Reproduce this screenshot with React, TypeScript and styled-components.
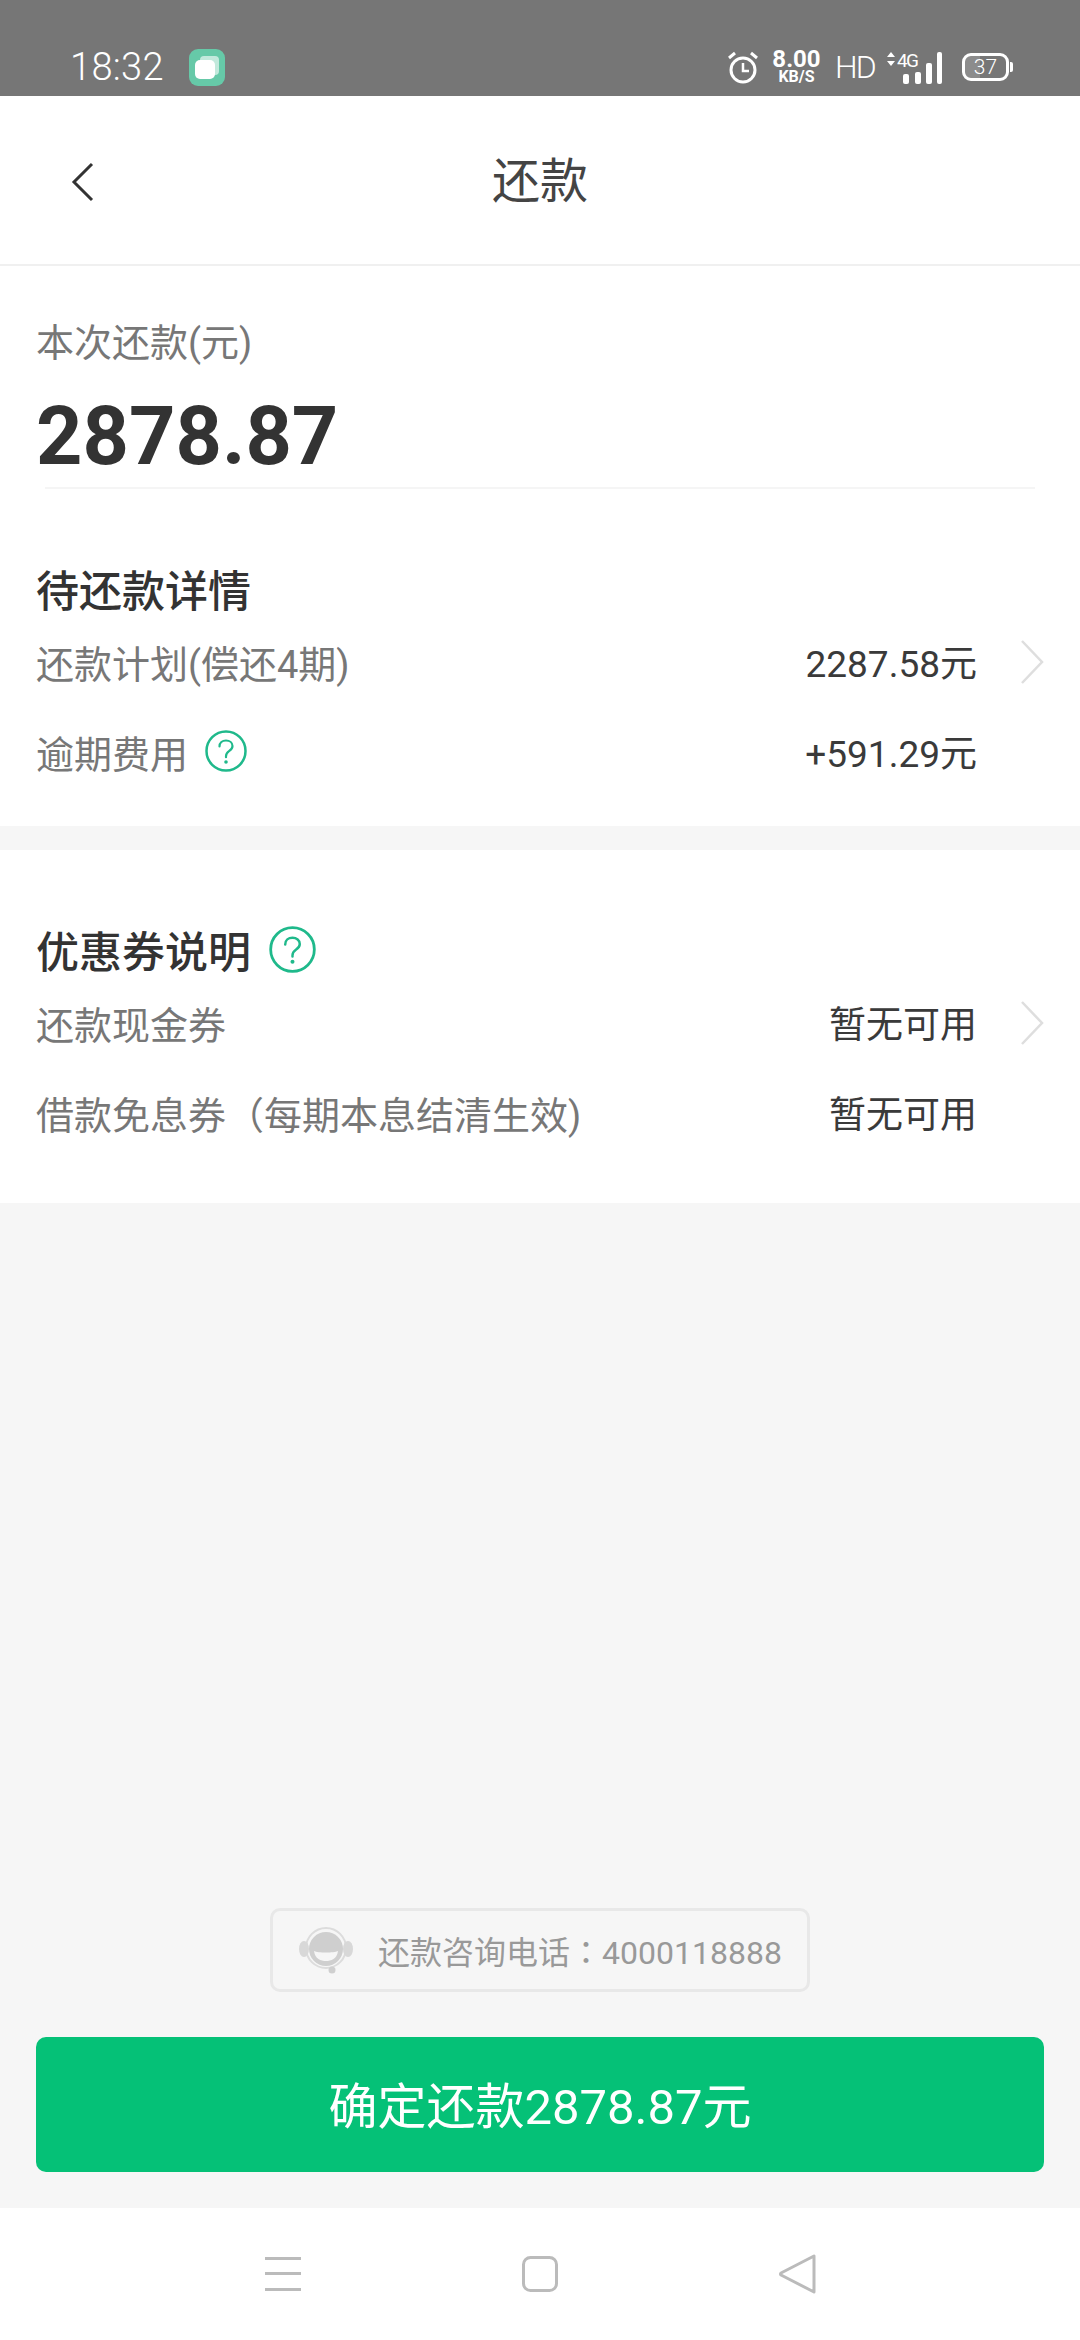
import styled, { createGlobalStyle } from 'styled-components'

const GlobalStyle = createGlobalStyle`
  html, body {
    margin: 0;
    padding: 0;
    background: #f6f6f6;
  }
  * {
    box-sizing: border-box;
  }
`

const Page = styled.div`
  width: 1080px;
  height: 2340px;
  display: flex;
  flex-direction: column;
  background: #f6f6f6;
  font-family: Roboto, 'Noto Sans CJK SC', sans-serif;
  overflow: hidden;
`

const StatusBar = styled.div`
  height: 96px;
  flex-shrink: 0;
  padding: 38px 68px 0 70px;
  display: flex;
  align-items: center;
  justify-content: space-between;
  background: #767676;
  color: #fff;
`

const StatusLeft = styled.div`
  display: flex;
  align-items: center;
  gap: 25px;
`

const StatusRight = styled.div`
  display: flex;
  align-items: center;
  gap: 15px;
`

const Time = styled.span`
  font-size: 38px;
  font-weight: 300;
  line-height: 44px;
  letter-spacing: 0.3px;
`

const Speed = styled.div`
  width: 47px;
  display: flex;
  flex-direction: column;
  align-items: center;
  font-weight: 700;
`

const SpeedValue = styled.span`
  font-size: 24px;
  line-height: 20px;
`

const SpeedUnit = styled.span`
  font-size: 16px;
  line-height: 16px;
`

const Hd = styled.span`
  width: 36px;
  font-size: 32px;
  font-weight: 300;
  line-height: 36px;
  letter-spacing: -2px;
`

const Battery = styled.div<{ $level: number }>`
  position: relative;
  width: 47px;
  height: 28px;
  margin: 0 3px 0 5px;
  border: 3px solid #fff;
  border-radius: 9px;
  display: flex;
  align-items: center;
  justify-content: center;
  font-size: 21px;
  font-weight: 300;
  background: linear-gradient(90deg, #8c8c8c ${(p) => p.$level}%, transparent ${(p) => p.$level}%);

  &::after {
    content: '';
    position: absolute;
    right: -7px;
    top: 6px;
    width: 3px;
    height: 10px;
    border-radius: 0 2px 2px 0;
    background: #fff;
  }
`

const NavBar = styled.header`
  position: relative;
  height: 170px;
  flex-shrink: 0;
  padding-top: 4px;
  display: flex;
  align-items: center;
  justify-content: center;
  background: #fff;
  border-bottom: 2px solid #f0f0f0;
`

const BackButton = styled.div`
  position: absolute;
  left: 71px;
  top: 66px;
  display: flex;
`

const NavTitle = styled.h1`
  margin: 0;
  font-size: 48px;
  font-weight: 400;
  line-height: 60px;
  color: #444;
`

const Card = styled.section<{ $top: number; $bottom: number }>`
  padding: ${(p) => p.$top}px 0 ${(p) => p.$bottom}px;
  background: #fff;
  flex-shrink: 0;
`

const Inner = styled.div`
  padding: 0 36px;
`

const AmountLabel = styled.div`
  font-size: 38px;
  line-height: 50px;
  margin-top: -1px;
  color: #777;
`

const Amount = styled.div`
  margin-top: 24px;
  margin-bottom: -1px;
  font-size: 81px;
  font-weight: 700;
  line-height: 90px;
  color: #333;
`

const Divider = styled.div`
  height: 2px;
  margin: 6px 45px 0;
  background: #f5f5f5;
`

const SectionTitle = styled.h2<{ $top?: number }>`
  margin: ${(p) => p.$top ?? 0}px 0 0;
  padding: 0 36px 2px;
  height: 60px;
  display: flex;
  align-items: center;
  gap: 18px;
  font-size: 43px;
  font-weight: 500;
  color: #333;
`

const Row = styled.div`
  position: relative;
  height: 90px;
  padding: 0 103px 6px 36px;
  display: flex;
  align-items: center;
  justify-content: space-between;
  font-size: 38px;
`

const RowLabel = styled.div`
  display: flex;
  align-items: center;
  gap: 17px;
  color: #777;
`

const RowValue = styled.div`
  font-size: 37px;
  color: #3a3a3a;
`

const RowArrow = styled.div`
  position: absolute;
  right: 36px;
  top: 21px;
  display: flex;
`

const CardGap = styled.div`
  height: 24px;
  flex-shrink: 0;
`

const Spacer = styled.div`
  flex: 1;
`

const SupportWrap = styled.div`
  display: flex;
  justify-content: center;
  flex-shrink: 0;
`

const SupportBox = styled.div`
  width: 540px;
  height: 84px;
  padding-left: 26px;
  display: flex;
  align-items: center;
  gap: 25px;
  border: 3px solid #e8e8e8;
  border-radius: 10px;
  font-size: 32px;
  color: #999;
`

const Colon = styled.span`
  font-family: 'Noto Sans CJK TC', sans-serif;
`

const PayButton = styled.button`
  display: block;
  width: 1008px;
  height: 135px;
  margin: 45px 36px 36px;
  padding: 0 0 4px;
  flex-shrink: 0;
  border: 0;
  border-radius: 10px;
  background: #05c177;
  color: #fff;
  font-family: inherit;
  font-size: 49px;
`

const BottomNav = styled.nav`
  height: 132px;
  flex-shrink: 0;
  padding-left: 2px;
  display: flex;
  align-items: center;
  justify-content: center;
  gap: 221px;
  background: #fff;
`

const Help = ({ size }: { size: number }) => (
  <svg width={size} height={size} viewBox="0 0 42 42" fill="none">
    <circle cx="21" cy="21" r="19.5" stroke="#1fb98b" strokeWidth="2.5" />
    <path
      d="M14.5 16.5c0-3.8 2.9-6 6.5-6s6.500 2.300 6.500 5.500c0 2.700-1.700 4-3.500 5.200-1.900 1.300-3 2.400-3 5v1"
      stroke="#1fb98b"
      strokeWidth="2.2"
      strokeLinecap="round"
    />
    <circle cx="21" cy="32" r="1.800" fill="#1fb98b" />
  </svg>
)

const Chevron = () => (
  <svg width="24" height="44" viewBox="0 0 24 44" fill="none">
    <path d="M2 1l20 21L2 43" stroke="#dedede" strokeWidth="2.500" />
  </svg>
)

const rows = {
  detail: [
    { label: '还款计划(偿还4期)', value: '2287.58元', arrow: true },
    { label: '逾期费用', value: '+591.29元', help: true },
  ],
  coupon: [
    { label: '还款现金券', value: '暂无可用', arrow: true },
    { label: '借款免息券（每期本息结清生效)', value: '暂无可用' },
  ],
}

type RowData = { label: string; value: string; arrow?: boolean; help?: boolean }

const InfoRow = ({ label, value, arrow, help }: RowData) => (
  <Row>
    <RowLabel>
      {label}
      {help && <Help size={42} />}
    </RowLabel>
    <RowValue>{value}</RowValue>
    {arrow && (
      <RowArrow>
        <Chevron />
      </RowArrow>
    )}
  </Row>
)

export default function App() {
  return (
    <Page>
      <GlobalStyle />
      <StatusBar>
        <StatusLeft>
          <Time>18:32</Time>
          <svg width="36" height="37" viewBox="0 0 36 37">
            <rect width="36" height="37" rx="9" fill="#66c9a8" />
            <rect x="11" y="7" width="19" height="19" rx="4" fill="#fff" opacity="0.6" />
            <rect x="6" y="11" width="20" height="19" rx="5" fill="#fff" />
          </svg>
        </StatusLeft>
        <StatusRight>
          <svg width="30" height="33" viewBox="0 0 30 33" fill="none" stroke="#fff">
            <circle cx="15" cy="19" r="12" strokeWidth="3" />
            <path d="M15 12v8h6" strokeWidth="2.500" />
            <path d="M1 7l6-5M29 7l-6-5" strokeWidth="3" />
          </svg>
          <Speed>
            <SpeedValue>8.00</SpeedValue>
            <SpeedUnit>KB/S</SpeedUnit>
          </Speed>
          <Hd>HD</Hd>
          <svg width="56" height="34" viewBox="0 0 56 34" fill="#fff">
            <path d="M5 2l4 5H1zM5 16l4-5H1z" />
            <text x="11" y="17" fontFamily="Roboto" fontSize="19" textLength="22">
              4G
            </text>
            <rect x="17" y="24" width="6" height="10" rx="2" />
            <rect x="29" y="22" width="6" height="12" rx="2" />
            <rect x="40" y="13" width="6" height="21" rx="2" />
            <rect x="51" y="2" width="5" height="32" rx="2" />
          </svg>
          <Battery $level={37}>37</Battery>
        </StatusRight>
      </StatusBar>

      <NavBar>
        <BackButton>
          <svg width="24" height="40" viewBox="0 0 24 40" fill="none">
            <path d="M21 2L3 20l18 18" stroke="#333" strokeWidth="3" />
          </svg>
        </BackButton>
        <NavTitle>还款</NavTitle>
      </NavBar>

      <Card $top={53} $bottom={27}>
        <Inner>
          <AmountLabel>本次还款(元)</AmountLabel>
          <Amount>2878.87</Amount>
        </Inner>
        <Divider />
        <SectionTitle $top={70}>待还款详情</SectionTitle>
        {rows.detail.map((r) => (
          <InfoRow key={r.label} {...r} />
        ))}
      </Card>

      <CardGap />

      <Card $top={70} $bottom={43}>
        <SectionTitle>
          优惠券说明
          <Help size={47} />
        </SectionTitle>
        {rows.coupon.map((r) => (
          <InfoRow key={r.label} {...r} />
        ))}
      </Card>

      <Spacer />

      <SupportWrap>
        <SupportBox>
          <svg width="54" height="48" viewBox="0 0 54 48" fill="none">
            <circle cx="27" cy="23" r="17" fill="#cfcfcf" />
            <circle cx="27" cy="22" r="20" stroke="#dcdcdc" strokeWidth="2" />
            <ellipse cx="5" cy="23" rx="5" ry="8" fill="#d8d8d8" />
            <ellipse cx="49" cy="23" rx="5" ry="8" fill="#d8d8d8" />
            <path d="M15 25c4 2 20 2 24 0-1 8-7 10-12 10s-11-2-12-10z" fill="#f6f6f6" />
            <circle cx="33" cy="44" r="3.500" fill="#cfcfcf" />
          </svg>
          <span>
            还款咨询电话<Colon>：</Colon>4000118888
          </span>
        </SupportBox>
      </SupportWrap>

      <PayButton>确定还款2878.87元</PayButton>

      <BottomNav>
        <svg width="36" height="34" viewBox="0 0 36 34" fill="#bbb">
          <rect y="0" width="36" height="3" />
          <rect y="15" width="36" height="3" />
          <rect y="31" width="36" height="3" />
        </svg>
        <svg width="36" height="36" viewBox="0 0 36 36" fill="none">
          <rect x="1.500" y="1.500" width="33" height="33" rx="7" stroke="#bbb" strokeWidth="3" />
        </svg>
        <svg width="38" height="40" viewBox="0 0 38 40" fill="none">
          <path
            d="M35 2v36L2 21a1.500 1.500 0 0 1 0-2z"
            stroke="#bbb"
            strokeWidth="3"
            strokeLinejoin="round"
          />
        </svg>
      </BottomNav>
    </Page>
  )
}
